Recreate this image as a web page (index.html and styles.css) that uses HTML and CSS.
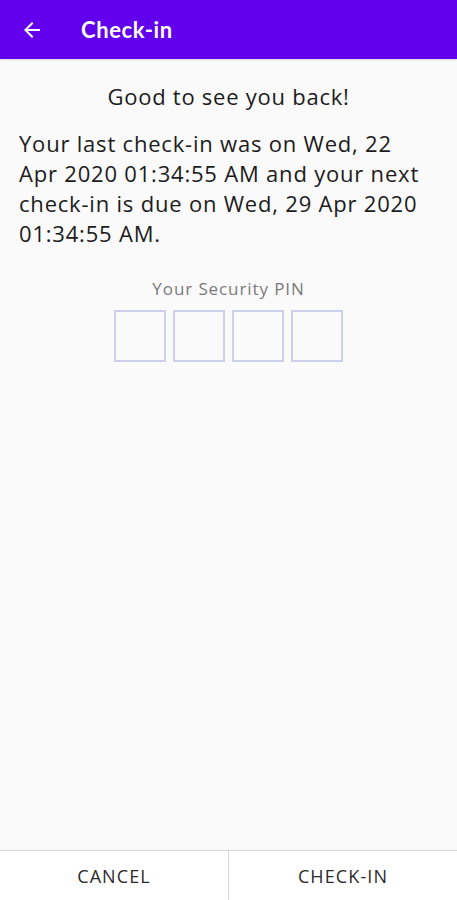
FILE: index.html
```html
<!DOCTYPE html>
<html lang="en">

<head>
  <meta charset="UTF-8">
  <meta name="viewport" content="width=device-width, initial-scale=1.0">
  <title>Check-in</title>
  <link rel="stylesheet" href="styles.css">
</head>

<body>
  <div class="screen">
    <header class="toolbar">
      <svg class="back-icon" width="24" height="24" viewBox="0 0 24 24">
        <path d="M20 11H7.83l5.59-5.59L12 4l-8 8 8 8 1.41-1.41L7.83 13H20v-2z" fill="#ffffff" />
      </svg>
      <h1>Check-in</h1>
    </header>

    <main class="content">
      <p class="greeting">Good to see you back!</p>
      <p class="info">Your last check-in was on Wed, 22 Apr 2020 01:34:55 AM and your next check-in is due on Wed, 29 Apr 2020 01:34:55 AM.</p>

      <div class="pin">
        <label>Your Security PIN</label>
        <div class="pin-boxes">
          <span class="pin-box"></span>
          <span class="pin-box"></span>
          <span class="pin-box"></span>
          <span class="pin-box"></span>
        </div>
      </div>
    </main>

    <footer class="actions">
      <button id="cancel-btn">CANCEL</button>
      <button id="checkin-btn">CHECK-IN</button>
    </footer>
  </div>
</body>

</html>
```

FILE: styles.css
```css
body {
  margin: 0;
  font-family: "Open Sans", "Noto Sans", sans-serif;
  background-color: #fafafa;
}

.screen {
  display: flex;
  flex-direction: column;
  height: 900px;
}

.toolbar {
  display: flex;
  align-items: center;
  height: 59px;
  padding-left: 20px;
  background-color: #6200ee;
  color: #ffffff;
  box-shadow: 0 1px 2px rgba(0, 0, 0, 0.15);
}

.back-icon {
  margin-right: 37px;
}

.toolbar h1 {
  margin: 0;
  font-family: Lato, sans-serif;
  font-size: 22px;
  font-weight: bold;
  letter-spacing: 0.6px;
}

.content {
  flex: 1;
  padding: 0 25px 0 19px;
  color: #1c1c1c;
}

.greeting {
  margin: 22px 0 0;
  padding-left: 6px;
  text-align: center;
  font-size: 22px;
  letter-spacing: 0.75px;
  line-height: 30px;
}

.info {
  margin: 17px 0 0;
  font-size: 22px;
  letter-spacing: 0.8px;
  line-height: 30px;
}

.pin {
  display: flex;
  flex-direction: column;
  align-items: center;
  margin-top: 30px;
  padding-left: 6px;
}

.pin label {
  font-size: 17px;
  letter-spacing: 0.9px;
  color: #7a7a7a;
  line-height: 22px;
}

.pin-boxes {
  display: flex;
  gap: 7px;
  margin-top: 10px;
}

.pin-box {
  box-sizing: border-box;
  width: 52px;
  height: 52px;
  border: 2px solid #cdd0ec;
}

.actions {
  display: flex;
  height: 49px;
  border-top: 1px solid #d6d6d6;
  background-color: #ffffff;
}

button {
  flex: 1;
  border: none;
  background-color: #ffffff;
  font-family: "Open Sans", "Noto Sans", sans-serif;
  font-size: 18px;
  letter-spacing: 1.1px;
  color: #2b2b2b;
  cursor: pointer;
}

button#cancel-btn {
  border-right: 1px solid #d6d6d6;
}
```
